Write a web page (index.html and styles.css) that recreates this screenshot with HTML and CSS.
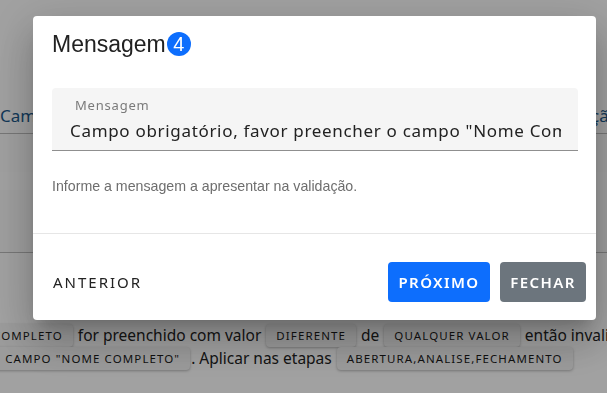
FILE: index.html
```html
<!DOCTYPE html>
<html lang="pt-BR">
<head>
    <meta charset="UTF-8">
    <meta name="viewport" content="width=device-width, initial-scale=1.0">
    <title>Mensagem</title>
    <link rel="stylesheet" href="styles.css">
</head>
<body>
<!-- pagina de fundo -->
<div class="page">
    <div class="page-top">
        <div class="tabs">
            <span class="tab">Campo</span>
            <span class="tab tab-right">Validação</span>
        </div>
    </div>
    <div class="page-band"></div>
    <div class="page-band light"></div>
    <div class="page-band tall"></div>
    <div class="page-rule">
        <p class="rule-line shift1">
            <span class="chip">Nome completo</span> for preenchido com valor
            <span class="chip">Diferente</span> de
            <span class="chip">Qualquer valor</span> então invalidar
        </p>
        <p class="rule-line shift2">
            <span class="chip">o campo "Nome completo"</span>. Aplicar nas etapas
            <span class="chip">Abertura,Analise,Fechamento</span>
        </p>
    </div>
</div>

<!-- dialogo -->
<div class="overlay"></div>
<div class="dialog">
    <div class="dialog-title">
        Mensagem<span class="badge">4</span>
    </div>

    <div class="dialog-body">
        <div class="field">
            <label class="field-label" for="msg">Mensagem</label>
            <input class="field-input" id="msg" type="text" value='Campo obrigatório, favor preencher o campo "Nome Completo"'>
        </div>
        <p class="helper">Informe a mensagem a apresentar na validação.</p>
    </div>

    <div class="dialog-actions">
        <button class="btn btn-text">Anterior</button>
        <div class="actions-right">
            <button class="btn btn-primary">Próximo</button>
            <button class="btn btn-secondary">Fechar</button>
        </div>
    </div>
</div>
</body>
</html>
```

FILE: styles.css
```css
* {
    box-sizing: border-box;
}

body {
    margin: 0;
    background-color: #fff;
    font-family: "Noto Sans", "Open Sans", sans-serif;
    overflow: hidden;
}

/* fundo */
.page {
    width: 607px;
    height: 393px;
}

.page-top {
    height: 134px;
    border-bottom: 1px solid #bdbdbd;
    padding-top: 104px;
}

.tabs {
    display: flex;
    justify-content: space-between;
    color: #1c5a8c;
    font-size: 17px;
}

.tab-right {
    margin-right: -12px;
}

.page-band {
    height: 38px;
    background-color: #fdfdfd;
}

.page-band.light {
    height: 18px;
    background-color: #fff;
}

.page-band.tall {
    height: 63px;
    background-color: #fcfcfc;
    border-bottom: 1px solid #bdbdbd;
}

.page-rule {
    padding-top: 71px;
    color: #222;
    font-size: 15.5px;
}

.rule-line {
    margin: 0;
    white-space: nowrap;
    line-height: 23px;
}

.shift1 {
    margin-left: -61px;
}

.shift2 {
    margin-left: -20px;
}

.chip {
    display: inline-block;
    background-color: #f5f5f5;
    border-radius: 4px;
    box-shadow: 0 1px 3px rgba(0, 0, 0, 0.28);
    padding: 0 10px;
    font-size: 11.5px;
    line-height: 23px;
    letter-spacing: 1.1px;
    text-transform: uppercase;
    color: #1a1a1a;
    vertical-align: 1px;
    margin: 0 1px;
}

.overlay {
    position: fixed;
    top: 0;
    left: 0;
    right: 0;
    bottom: 0;
    background-color: rgba(0, 0, 0, 0.37);
}

/* dialogo */
.dialog {
    position: fixed;
    top: 16px;
    left: 33px;
    width: 563px;
    background-color: #fff;
    border-radius: 4px;
    box-shadow: 0 11px 15px -7px rgba(0, 0, 0, 0.2), 0 24px 38px 3px rgba(0, 0, 0, 0.14), 0 9px 46px 8px rgba(0, 0, 0, 0.12);
}

.dialog-title {
    display: flex;
    align-items: center;
    padding: 0 19px;
    height: 56px;
    font-family: "Liberation Sans", Arial, sans-serif;
    font-size: 23px;
    color: #212121;
}

.badge {
    display: inline-flex;
    align-items: center;
    justify-content: center;
    width: 24px;
    height: 24px;
    border-radius: 50%;
    background-color: #0d6efd;
    color: #fff;
    font-size: 20px;
    margin-left: 1px;
}

.dialog-body {
    padding: 16px 18px 0 19px;
    height: 162px;
    border-bottom: 1px solid #e6e6e6;
}

.field {
    background-color: #f5f5f5;
    border-radius: 4px 4px 0 0;
    border-bottom: 1px solid #8f8f8f;
    height: 63px;
    padding: 8px 17px 0 18px;
    overflow: hidden;
}

.field-label {
    display: block;
    padding-left: 5px;
    font-size: 13px;
    color: #7a7a7a;
    letter-spacing: 0.8px;
    line-height: 18px;
}

.field-input {
    width: 100%;
    border: none;
    background: transparent;
    padding: 0;
    margin-top: 5px;
    font-family: "Noto Sans", sans-serif;
    font-size: 17px;
    letter-spacing: 0.68px;
    color: #222;
    outline: none;
}

.helper {
    margin: 27px 0 0;
    font-family: "Liberation Sans", Arial, sans-serif;
    font-size: 14.2px;
    color: #6e6e6e;
}

.dialog-actions {
    display: flex;
    align-items: center;
    justify-content: space-between;
    padding: 28px 10px 18px 20px;
}

.actions-right {
    display: flex;
    gap: 10px;
}

.btn {
    font-family: "Noto Sans", sans-serif;
    font-size: 15px;
    text-transform: uppercase;
    letter-spacing: 1.4px;
    border: none;
    border-radius: 4px;
    cursor: pointer;
    height: 40px;
}

.btn-text {
    background: none;
    color: #222;
    padding: 0;
    letter-spacing: 2px;
}

.btn-primary,
.btn-secondary {
    color: #fff;
    font-weight: 600;
    padding: 0 10px;
}

.btn-primary {
    background-color: #0d6efd;
    width: 102px;
}

.btn-secondary {
    background-color: #6c757d;
    width: 86px;
}
```
